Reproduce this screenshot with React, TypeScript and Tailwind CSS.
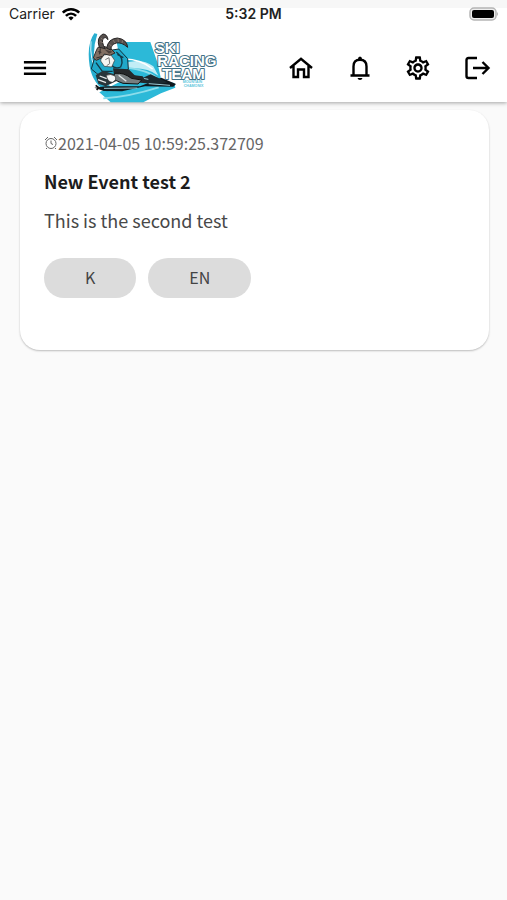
import { useState } from 'react';
import type { ReactNode } from 'react';

const ICONS = {
  menu: 'M2.5 18.1h19v-2.2h-19zm0-5h19v-2.2h-19zm0-7.2v2.2h19V5.9z',
  gear: 'M19.43 12.98c.04-.32.07-.64.07-.98s-.03-.66-.07-.98l2.11-1.65c.19-.15.24-.42.12-.64l-2-3.46c-.12-.22-.39-.3-.61-.22l-2.49 1c-.52-.4-1.08-.73-1.69-.98l-.38-2.65C14.46 2.18 14.25 2 14 2h-4c-.25 0-.46.18-.49.42l-.38 2.65c-.61.25-1.17.59-1.69.98l-2.49-1c-.23-.09-.49 0-.61.22l-2 3.46c-.13.22-.07.49.12.64l2.11 1.65c-.04.32-.07.65-.07.98s.03.66.07.98l-2.11 1.65c-.19.15-.24.42-.12.64l2 3.46c.12.22.39.3.61.22l2.49-1c.52.4 1.08.73 1.69.98l.38 2.65c.03.24.24.42.49.42h4c.25 0 .46-.18.49-.42l.38-2.65c.61-.25 1.17-.59 1.69-.98l2.49 1c.23.09.49 0 .61-.22l2-3.46c.12-.22.07-.49-.12-.64l-2.11-1.65zm-1.98-1.71c.04.31.05.52.05.73s-.02.43-.05.73l-.14 1.13.89.7 1.08.84-.7 1.21-1.27-.51-1.04-.42-.9.68c-.43.32-.84.56-1.25.73l-1.06.43-.16 1.13-.2 1.35h-1.4l-.19-1.35-.16-1.13-1.06-.43c-.43-.18-.83-.41-1.23-.71l-.91-.7-1.06.43-1.27.51-.7-1.21 1.08-.84.89-.7-.14-1.13c-.03-.31-.05-.54-.05-.74s.02-.43.05-.73l.14-1.13-.89-.7-1.08-.84.7-1.21 1.27.51 1.04.42.9-.68c.43-.32.84-.56 1.25-.73l1.06-.43.16-1.13.2-1.35h1.39l.19 1.35.16 1.13 1.06.43c.43.18.83.41 1.23.71l.91.7 1.06-.43 1.27-.51.7 1.21-1.07.85-.89.7.14 1.13zM12 8c-2.21 0-4 1.79-4 4s1.79 4 4 4 4-1.79 4-4-1.79-4-4-4zm0 6c-1.1 0-2-.9-2-2s.9-2 2-2 2 .9 2 2-.9 2-2 2z',
};

function IconButton({ label, children }: { label: string; children: ReactNode }) {
  return (
    <button type="button" aria-label={label} className="flex size-7 items-center justify-center text-black">
      {children}
    </button>
  );
}

function Glyph({ d }: { d: string }) {
  return (
    <svg viewBox="0 0 24 24" fill="currentColor" className="size-7 shrink-0">
      <path d={d} />
    </svg>
  );
}

function LineIcon({ children }: { children: ReactNode }) {
  return (
    <svg viewBox="0 0 28 28" className="size-7 shrink-0" fill="none" stroke="currentColor" strokeWidth="2.4">
      {children}
    </svg>
  );
}

function StatusBar() {
  return (
    <div className="grid h-7 grid-cols-3 items-center border-t-8 border-[#f7f7f7] px-2 text-sm leading-3 text-[#222]">
      <div className="-mt-2 flex items-center gap-1.5 pl-px">
        <span>Carrier</span>
        <svg viewBox="0 0 20 14" className="h-3.5 w-5 text-black" fill="none" stroke="currentColor" strokeWidth="2.6">
          <path d="M1.8 5.6C6.5 1.1 13.5 1.1 18.2 5.6" />
          <path d="M4.9 8.9C7.9 6 12.1 6 15.1 8.9" />
          <path d="M7.4 10.7Q10 8.4 12.6 10.7L10 13.5Z" fill="currentColor" stroke="none" />
        </svg>
      </div>
      <span className="-mt-2 text-center font-semibold">5:32 PM</span>
      <svg viewBox="0 0 30 14" className="-mt-2 h-3.5 w-[30px] justify-self-end">
        <rect x="1" y="1" width="26" height="12" rx="4" fill="#eee" stroke="#b5b5b5" strokeWidth="1.5" />
        <rect x="3" y="3" width="22" height="8" rx="2" fill="#000" />
        <path d="M28 5q2 2 0 4z" fill="#b5b5b5" />
      </svg>
    </div>
  );
}

function Logo() {
  return (
    <svg viewBox="24 24 390 210" className="h-[70px] w-[130px]" role="img" aria-label="Ski Racing Team">
      {/* blue backdrop and ski track */}
      <path d="M110 51H211L232 112L244 166L283 174L286 188L243 205L190 232H92L58 202L130 165Z" fill="#2cb9d8" />
      <path d="M43 25Q19 58 29 124Q38 177 82 203L98 190Q55 159 43 109Q38 68 52 27Z" fill="#28afd0" />
      <path d="M33 49Q28 102 52 150" fill="none" stroke="#dff5fa" strokeWidth="3" />
      <path d="M128 116Q182 96 220 124L235 152Q195 122 128 133Z" fill="#c2edf6" />
      <path d="M131 102Q179 101 218 132" fill="none" stroke="#fff" strokeWidth="4" />
      <path d="M142 128Q205 137 229 157M70 220Q148 215 236 187" fill="none" stroke="#8cddeb" strokeWidth="5" />

      {/* skis */}
      <path d="M43 188L77 184L180 184L244 158L288 177L280 185L195 184L126 199L71 198Z" fill="#10191e" />
      <path d="M150 146L186 160L212 148L262 172L228 181L190 172Z" fill="#1b2a30" />
      <path d="M72 190L172 189M206 176L270 181M141 151L205 163" stroke="#9ccbd5" strokeWidth="3" />
      <path d="M47 181L56 188L50 195" fill="none" stroke="#111" strokeWidth="5" />

      {/* racer */}
      <path d="M78 78L116 72L143 101L145 132L123 153L67 159L34 132L44 98Z" fill="#20a8c9" stroke="#122f39" strokeWidth="3" />
      <path d="M109 81Q135 101 122 126Q105 133 94 120M48 113L67 139L98 139M112 88L130 98" fill="none" stroke="#123846" strokeWidth="4" />
      <path d="M99 130L146 133L164 151L188 154L200 175L163 172L137 153L104 165Z" fill="#26282a" />
      <path d="M104 145Q132 142 154 160L185 165L174 177L129 175L99 163Z" fill="#777e80" stroke="#111" strokeWidth="3" />
      <path d="M65 91L91 87L104 106L95 126L73 124L62 108Z" fill="#f5f5f2" stroke="#333" strokeWidth="2" />
      <path d="M76 104L87 98L89 116L80 122" fill="none" stroke="#777" strokeWidth="3" />
      <path d="M47 150L69 137L103 148L108 169L77 184L55 176Z" fill="#28353a" />
      <path d="M79 151Q92 145 105 153Q112 165 97 172Q82 171 79 151Z" fill="#f5f5f5" stroke="#333" strokeWidth="2" />
      <path d="M54 164L78 173M59 153L80 161M116 151L139 169" stroke="#e4e7e8" strokeWidth="4" />

      {/* goat head and horns */}
      <path d="M53 68L67 63L91 70L105 84L90 91L73 87L66 98L49 106L40 99L47 81Z" fill="#816f62" stroke="#302b29" strokeWidth="3" />
      <path d="M73 73L98 80L87 86Z" fill="#4b403b" />
      <path d="M49 99L67 94M55 80L64 82M61 70L59 88" stroke="#302b29" strokeWidth="3" />
      <path d="M58 67Q48 38 69 27Q82 28 84 44Q78 34 70 39Q62 50 76 71Z" fill="#57504d" stroke="#252323" strokeWidth="3" />
      <path d="M80 70Q84 41 112 39Q141 43 143 67Q125 51 109 54Q92 58 93 75Z" fill="#57504d" stroke="#252323" strokeWidth="3" />
      <path d="M61 50L71 54M63 40L72 45M88 58L96 64M99 45L105 54M114 41L115 51M128 46L126 54" stroke="#9b8b80" strokeWidth="2" />

      <g
        fill="#fff"
        stroke="#3f7186"
        strokeWidth="6"
        paintOrder="stroke"
        strokeLinejoin="round"
        fontFamily="Liberation Sans, Arial, sans-serif"
        fontWeight="700"
        fontSize="45"
      >
        <text x="224" y="85">SKI</text>
        <text x="232" y="123">RACING</text>
        <text x="247" y="161">TEAM</text>
      </g>
      <g fill="#62c6dc" fontFamily="Liberation Sans, Arial, sans-serif" fontWeight="700" fontSize="11">
        <text x="308" y="174">MOUNTAIN</text>
        <text x="311" y="186">CHAMONIX</text>
      </g>
    </svg>
  );
}

function Header() {
  return (
    <header className="relative bg-white shadow-[0_1px_4px_rgba(0,0,0,0.35)]">
      <StatusBar />
      <div className="flex h-[74px] items-center pt-1.5 pr-4 pl-[21px]">
        <IconButton label="Menu">
          <Glyph d={ICONS.menu} />
        </IconButton>
        <a href="#" className="ml-[39px]">
          <Logo />
        </a>
        <nav className="ml-auto flex items-center gap-[31px]">
          <IconButton label="Home">
            <LineIcon>
              <path d="M4 14L15 4.8L26 14M7.5 12v11h4.5v-7.5h6V23h4.5V12" />
            </LineIcon>
          </IconButton>
          <IconButton label="Notifications">
            <LineIcon>
              <path d="M5.5 21.5h19M8.5 21.5V12.5q0-6.7 6.5-6.7t6.5 6.7V21.5" />
              <path d="M13 5q0-2.5 2-2.5t2 2.5zM12.5 24h5q-.5 2-2.5 2t-2.5-2z" fill="currentColor" stroke="none" />
            </LineIcon>
          </IconButton>
          <IconButton label="Settings">
            <Glyph d={ICONS.gear} />
          </IconButton>
          <IconButton label="Log out">
            <LineIcon>
              <path d="M14 4H5.5q-2 0-2 2v16q0 2 2 2H14M10 14h15M19.5 8l6 6-6 6" />
            </LineIcon>
          </IconButton>
        </nav>
      </div>
    </header>
  );
}

function LanguageButton({ label }: { label: string }) {
  const [pressed, setPressed] = useState(false);

  return (
    <button
      type="button"
      aria-pressed={pressed}
      onClick={() => setPressed(!pressed)}
      className="h-10 rounded-full bg-[#dcdcdc] px-[41px] pb-0.5 text-base text-[#444]"
    >
      {label}
    </button>
  );
}

function EventCard() {
  return (
    <article className="rounded-[20px] bg-white px-6 pt-[23px] pb-[52px] shadow-[0_1px_2px_rgba(0,0,0,0.25)]">
      <div className="flex h-5 items-center text-[#666]">
        <svg viewBox="0 0 14 14" className="size-3.5" fill="none" stroke="currentColor" strokeWidth="1">
          <circle cx="7" cy="7.5" r="5" />
          <path d="M7 4.5v3l2 1M1 4l3-3M10 1l3 3M3 12l-1 1M11 12l1 1" />
        </svg>
        <time className="text-base leading-5">2021-04-05 10:59:25.372709</time>
      </div>
      <h2 className="mt-4 text-lg leading-6 font-bold text-[#1c1c1c]">New Event test 2</h2>
      <p className="mt-[15px] text-lg leading-6 text-[#484848]">This is the second test</p>
      <div className="mt-[26px] flex gap-3">
        <LanguageButton label="K" />
        <LanguageButton label="EN" />
      </div>
    </article>
  );
}

export default function App() {
  return (
    <div className="min-h-screen bg-[#fafafa] font-['Inter',sans-serif]">
      <Header />
      <main className="pt-2 pr-[18px] pl-5 font-['Noto_Sans_CJK_KR','Noto_Sans',sans-serif]">
        <EventCard />
      </main>
    </div>
  );
}
